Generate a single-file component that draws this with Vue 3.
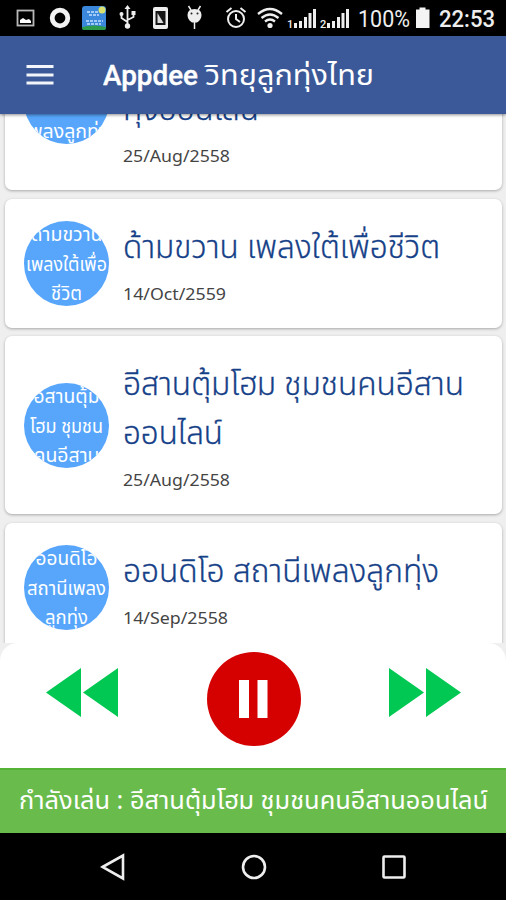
<template>
  <div class="phone">
    <div class="status-bar">
      <svg class="status-icons" width="506" height="36" viewBox="0 0 506 36">
        <!-- picture -->
        <g>
          <rect x="17.5" y="10.5" width="16" height="15" fill="none" stroke="#b8b8b8" stroke-width="1.8" />
          <path d="M20 23v-3l3-2 3 2 3-1 2 2v2z" fill="#fff" />
        </g>
        <!-- ring -->
        <circle cx="60" cy="18" r="7.8" fill="none" stroke="#f2f2f2" stroke-width="4.8" />
        <!-- radio app -->
        <rect x="82" y="6" width="24" height="24" rx="3" fill="#3b87dc" />
        <path d="M82 27q12-3 24 0v1q0 2-2 2H84q-2 0-2-2z" fill="#2c9b4b" />
        <circle cx="102" cy="10" r="3.5" fill="#d9e26e" />
        <path d="M87 12h12M89 15h10M86 21h17M87 24h14" stroke="#c3e2ff" stroke-width="1.4" stroke-dasharray="3 1" />
        <!-- usb -->
        <g fill="none" stroke="#eee" stroke-width="1.8">
          <path d="M127.500 9v16M127.500 22l-6-4v-4M127.500 20l6-3v-4" />
          <path d="M127.500 5l3 4h-6z" fill="#eee" stroke="none" />
          <circle cx="127.500" cy="26" r="2.700" fill="#eee" stroke="none" />
          <circle cx="121.500" cy="14" r="2" fill="#eee" stroke="none" />
          <path d="M131.500 11h4v4h-4z" fill="#eee" stroke="none" />
        </g>
        <!-- sim -->
        <rect x="153" y="7" width="15" height="22" rx="2" fill="#eee" />
        <path d="M155.500 11h10v14h-10z" fill="#161616" />
        <path d="M157.500 13l6 10h-6z" fill="#ddd" />
        <!-- android -->
        <path d="M187.500 15q0-6 7-6t7 6q0 5-4.500 7.500h-5q-4.500-2.500-4.500-7.500z" fill="#eee" />
        <path d="M191 10l-2.500-4M198 10l2.500-4M194.500 22v7" stroke="#eee" stroke-width="1.500" />
        <circle cx="191.500" cy="13.500" r="1" fill="#222" />
        <circle cx="197.500" cy="13.500" r="1" fill="#222" />
        <!-- alarm -->
        <g fill="none" stroke="#eee" stroke-width="2">
          <circle cx="236" cy="19" r="8" />
          <path d="M236 14v5l4 3M226.500 12l5-4M245.500 12l-5-4" />
        </g>
        <!-- wifi -->
        <g fill="none" stroke="#eee" stroke-width="2.300">
          <path d="M258 14q12-10 24 0M261.500 18q8.500-7 17 0M265 21.500q5-4 10 0" />
          <circle cx="270" cy="25.500" r="2.600" fill="#eee" stroke="none" />
        </g>
        <!-- signal, both sims -->
        <path v-for="x in [294, 327]" :key="x" :transform="`translate(${x} 0)`" d="M0 28v-5h3v5zM5 28v-7h3v7zM10 28V17h3v11zM14.500 28V13h3v15zM19 28V9h3v19z" fill="#eee" />
        <text x="287" y="28" class="sim-no">1</text>
        <text x="320" y="28" class="sim-no">2</text>
        <text x="358" y="27" class="status-text" textLength="52" lengthAdjust="spacingAndGlyphs">100%</text>
        <path d="M416 9.500h3.500V7.500h6v2h4V28H416z" fill="#f4f4f4" />
        <text x="439" y="27" class="status-text clock" textLength="56" lengthAdjust="spacingAndGlyphs">22:53</text>
      </svg>
    </div>

    <header class="app-bar">
      <svg class="menu" width="28" height="20" viewBox="0 0 28 20">
        <path d="M.5 1.500h27M.5 10h27M.5 18h27" stroke="#f2f5fa" stroke-width="2.800" />
      </svg>
      <h1>
        <svg width="280" height="50">
          <text x="0" y="35" class="brand" textLength="95" lengthAdjust="spacingAndGlyphs">Appdee</text>
          <text x="102" y="35" class="brand-thai" textLength="169" lengthAdjust="spacingAndGlyphs">วิทยุลูกทุ่งไทย</text>
        </svg>
      </h1>
    </header>

    <main class="stations">
      <div class="list">
        <article v-for="station in stations" :key="station.id" class="card">
          <div class="avatar">
            <svg width="85" height="85">
              <text v-for="(line, i) in station.avatar" :key="i" x="42.500" :y="20 + i * 29.500" text-anchor="middle" :textLength="line.w" lengthAdjust="spacingAndGlyphs">{{ line.t }}</text>
            </svg>
          </div>
          <div class="info">
            <svg v-for="(line, i) in station.title" :key="i" class="title" width="370" height="49">
              <text x="0" y="38" :textLength="line.w" lengthAdjust="spacingAndGlyphs">{{ line.t }}</text>
            </svg>
            <svg class="date" width="120" height="24">
              <text x="0" y="18" :textLength="station.dateWidth" lengthAdjust="spacingAndGlyphs">{{ station.date }}</text>
            </svg>
          </div>
        </article>
      </div>
    </main>

    <section class="player">
      <svg width="72" height="49" viewBox="0 0 72 49">
        <path d="M0 24.500L35 0v49zM37 24.500L72 0v49z" fill="#00c853" />
      </svg>
      <button class="pause">
        <svg width="29" height="38" viewBox="0 0 29 38">
          <path d="M0 0h10v38H0zM18.500 0h10v38h-10z" fill="#fff" />
        </svg>
      </button>
      <svg width="72" height="49" viewBox="0 0 72 49">
        <path d="M0 0l35 24.500L0 49zM37 0l35 24.500L37 49z" fill="#00c853" />
      </svg>
    </section>

    <div class="now-playing">
      <svg width="475" height="50">
        <text x="0" y="32" textLength="469" lengthAdjust="spacingAndGlyphs">กำลังเล่น : อีสานตุ้มโฮม ชุมชนคนอีสานออนไลน์</text>
      </svg>
    </div>

    <nav class="nav-bar">
      <svg width="26" height="28" viewBox="0 0 26 28">
        <path d="M2.500 14L23 2.500v23z" />
      </svg>
      <svg width="26" height="28" viewBox="0 0 26 28">
        <circle cx="13" cy="14" r="11" />
      </svg>
      <svg width="26" height="28" viewBox="0 0 26 28">
        <rect x="2.500" y="3.500" width="21" height="21" rx="1" />
      </svg>
    </nav>
  </div>
</template>

<script setup>
// t: text of the line, w: its drawn width
const stations = [
  {
    id: 1,
    avatar: [{ t: 'สถานี', w: 44 }, { t: 'วิทยุ', w: 36 }, { t: 'เพลงลูกทุ่ง', w: 86 }],
    title: [{ t: 'สถานีเพลงลูก', w: 190 }, { t: 'ทุ่งออนไลน์', w: 136 }],
    date: '25/Aug/2558',
    dateWidth: 107,
  },
  {
    id: 2,
    avatar: [{ t: 'ด้ามขวาน', w: 72 }, { t: 'เพลงใต้เพื่อ', w: 81 }, { t: 'ชีวิต', w: 31 }],
    title: [{ t: 'ด้ามขวาน เพลงใต้เพื่อชีวิต', w: 317 }],
    date: '14/Oct/2559',
    dateWidth: 103,
  },
  {
    id: 3,
    avatar: [{ t: 'อีสานตุ้ม', w: 66 }, { t: 'โฮม ชุมชน', w: 73 }, { t: 'คนอีสาน', w: 66 }],
    title: [{ t: 'อีสานตุ้มโฮม ชุมชนคนอีสาน', w: 341 }, { t: 'ออนไลน์', w: 100 }],
    date: '25/Aug/2558',
    dateWidth: 107,
  },
  {
    id: 4,
    avatar: [{ t: 'ออนดิโอ', w: 62 }, { t: 'สถานีเพลง', w: 79 }, { t: 'ลูกทุ่ง', w: 43 }],
    title: [{ t: 'ออนดิโอ สถานีเพลงลูกทุ่ง', w: 316 }],
    date: '14/Sep/2558',
    dateWidth: 105,
  },
]
</script>

<style>
body {
  margin: 0;
}
</style>

<style scoped>
.phone {
  width: 506px;
  height: 900px;
  display: flex;
  flex-direction: column;
  overflow: hidden;
  background: #efefef;
  font-family: "Noto Sans Thai", "Noto Sans", sans-serif;
}

svg {
  display: block;
  flex: none;
}

.status-bar {
  height: 36px;
  flex: none;
  background: #000;
}

.status-text {
  font: 24px Roboto, sans-serif;
  fill: #eee;
}

.clock {
  font-weight: 500;
}

.sim-no {
  font: 500 11px Roboto, sans-serif;
  fill: #eee;
}

.app-bar {
  height: 78px;
  flex: none;
  display: flex;
  align-items: center;
  gap: 49px;
  padding-left: 26px;
  background: #3b5998;
  box-shadow: 0 1px 3px rgba(0, 0, 0, 0.45);
  z-index: 1;
}

h1 {
  margin: 0;
  font-weight: 400;
}

.brand {
  font: 500 27px Roboto, sans-serif;
  fill: #fff;
  stroke: #fff;
  stroke-width: 0.4px;
}

.brand-thai {
  font-size: 28px;
  fill: #fff;
}

.stations {
  height: 529px;
  flex: none;
  overflow: hidden;
}

.list {
  display: flex;
  flex-direction: column;
  gap: 8.6px;
  margin: -102px 4px 0 5px;
}

.card {
  display: flex;
  align-items: center;
  gap: 14px;
  box-sizing: border-box;
  padding: 21px 0 11px 19px;
  border-radius: 7px;
  background: #fff;
  box-shadow: 0 1px 3px rgba(0, 0, 0, 0.3);
}

.avatar {
  width: 85px;
  height: 85px;
  flex: none;
  overflow: hidden;
  margin-top: -9px;
  border-radius: 50%;
  background: #57a6fc;
}

.avatar text {
  font-size: 19px;
  fill: #fff;
}

.title text {
  font-size: 32px;
  font-weight: 300;
  fill: #164188;
  stroke: #164188;
  stroke-width: 0.3px;
}

.date {
  margin: 13px 0 11px;
}

.date text {
  font: 17px "Noto Sans", sans-serif;
  fill: #444;
}

.player {
  height: 125px;
  flex: none;
  display: flex;
  justify-content: space-between;
  box-sizing: border-box;
  padding: 25px 45px 0 46px;
  border-radius: 18px 18px 0 0;
  background: #fff;
}

.pause {
  width: 94px;
  height: 94px;
  display: flex;
  align-items: center;
  justify-content: center;
  margin-top: -16px;
  padding: 0;
  border: none;
  border-radius: 50%;
  background: #d50000;
}

.now-playing {
  height: 65px;
  flex: none;
  display: flex;
  align-items: center;
  box-sizing: border-box;
  padding-left: 19px;
  border-top: 2px solid #55b435;
  background: #69bc4b;
}

.now-playing text {
  font-size: 25px;
  fill: #fff;
}

.nav-bar {
  height: 67px;
  flex: none;
  display: flex;
  justify-content: space-between;
  align-items: center;
  padding: 0 99px 0 100px;
  background: #000;
}

.nav-bar svg {
  fill: none;
  stroke: #eee;
  stroke-width: 2.6;
}
</style>
